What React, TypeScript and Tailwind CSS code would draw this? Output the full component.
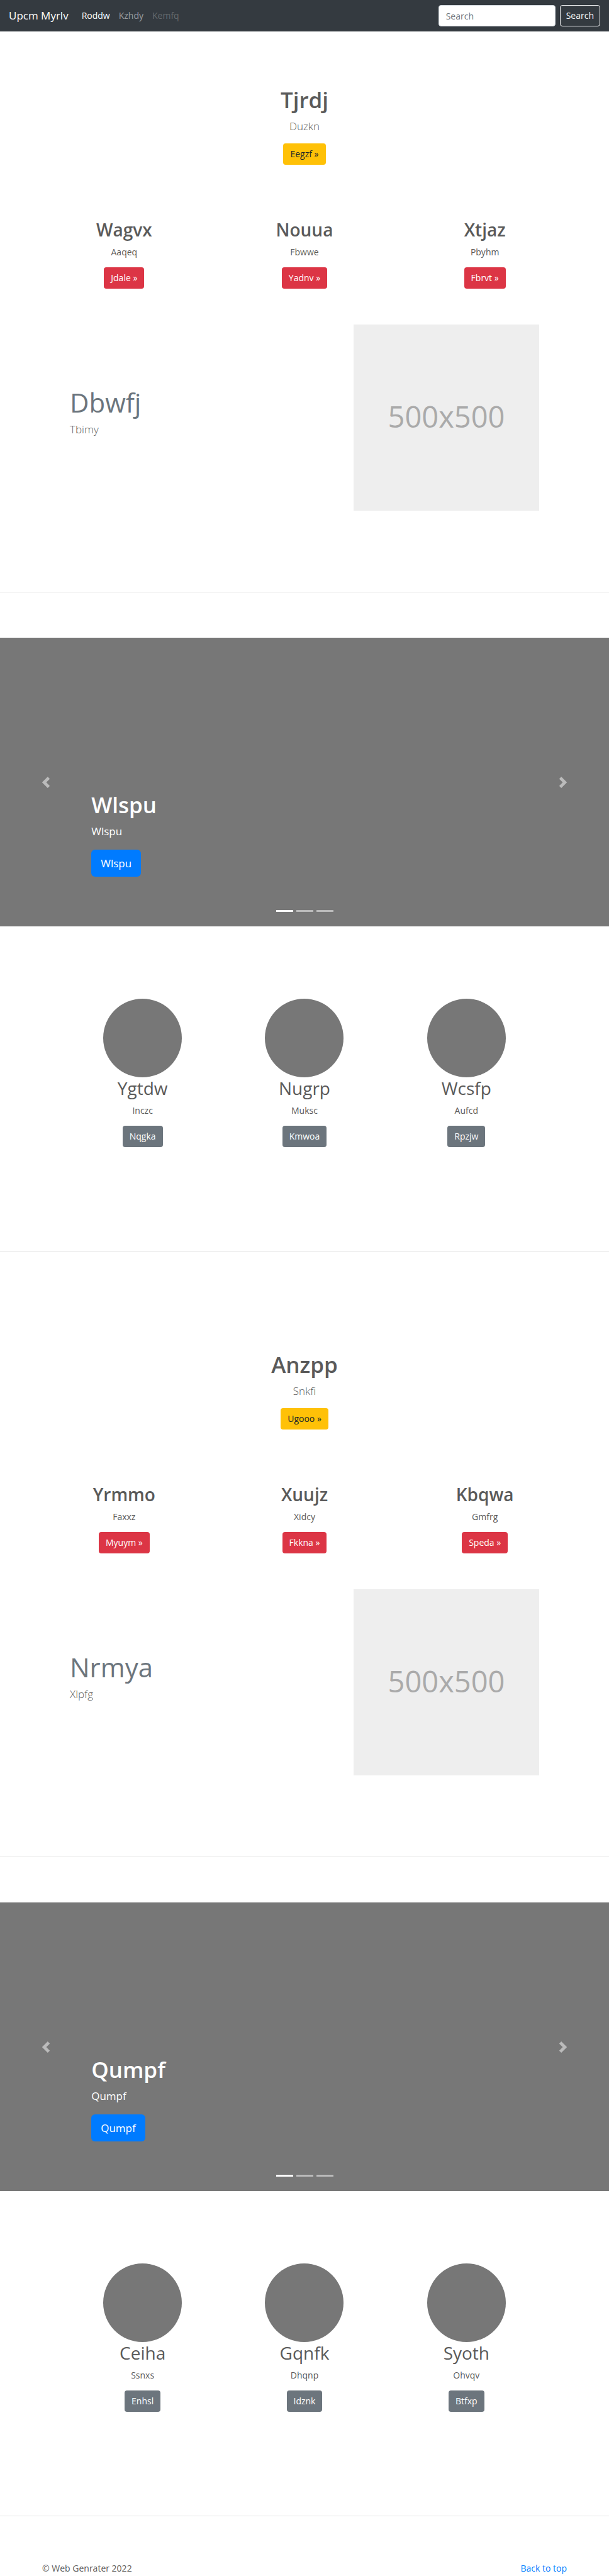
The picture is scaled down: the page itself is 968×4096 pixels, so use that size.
import React from "react";

type Item = { title: string; text: string; action: string };

type BlockData = {
  hero: Item;
  features: Item[];
  featurette: { title: string; text: string };
  slide: string;
  people: Item[];
};

const blocks: BlockData[] = [
  {
    hero: { title: "Tjrdj", text: "Duzkn", action: "Eegzf »" },
    features: [
      { title: "Wagvx", text: "Aaqeq", action: "Jdale »" },
      { title: "Nouua", text: "Fbwwe", action: "Yadnv »" },
      { title: "Xtjaz", text: "Pbyhm", action: "Fbrvt »" },
    ],
    featurette: { title: "Dbwfj", text: "Tbimy" },
    slide: "Wlspu",
    people: [
      { title: "Ygtdw", text: "Inczc", action: "Nqgka" },
      { title: "Nugrp", text: "Muksc", action: "Kmwoa" },
      { title: "Wcsfp", text: "Aufcd", action: "Rpzjw" },
    ],
  },
  {
    hero: { title: "Anzpp", text: "Snkfi", action: "Ugooo »" },
    features: [
      { title: "Yrmmo", text: "Faxxz", action: "Myuym »" },
      { title: "Xuujz", text: "Xidcy", action: "Fkkna »" },
      { title: "Kbqwa", text: "Gmfrg", action: "Speda »" },
    ],
    featurette: { title: "Nrmya", text: "Xlpfg" },
    slide: "Qumpf",
    people: [
      { title: "Ceiha", text: "Ssnxs", action: "Enhsl" },
      { title: "Gqnfk", text: "Dhqnp", action: "Idznk" },
      { title: "Syoth", text: "Ohvqv", action: "Btfxp" },
    ],
  },
];

const buttonTones = {
  warning: "bg-[#ffc107] text-[#212529]",
  danger: "bg-[#dc3545] text-white",
  secondary: "bg-[#6c757d] text-white",
};

function ActionLink({ tone, children }: { tone: keyof typeof buttonTones; children: React.ReactNode }) {
  return (
    <a href="#" className={`inline-flex h-[34px] items-center rounded px-[11px] text-sm ${buttonTones[tone]}`}>
      {children}
    </a>
  );
}

function Navbar() {
  return (
    <nav className="flex h-[50px] items-center justify-between bg-[#343a40] px-[14px]">
      <div className="flex items-center">
        <a href="#" className="mr-[21px] text-[17px] text-white">Upcm Myrlv</a>
        <div className="flex items-center gap-[14px] text-sm">
          <a href="#" className="text-white">Roddw</a>
          <a href="#" className="text-white/50">Kzhdy</a>
          <a href="#" className="text-white/25">Kemfq</a>
        </div>
      </div>
      <form className="flex gap-[7px]" onSubmit={(e) => e.preventDefault()}>
        <input
          type="text"
          aria-label="Search"
          placeholder="Search"
          className="h-[34px] w-[186px] rounded border border-[#ced4da] bg-white px-[11px] text-sm text-[#495057] placeholder:text-[#6c757d] placeholder:opacity-100"
        />
        <button type="submit" className="h-[34px] rounded border border-[#f8f9fa] px-[9px] text-sm text-[#f8f9fa]">
          Search
        </button>
      </form>
    </nav>
  );
}

function Arrow({ direction }: { direction: "prev" | "next" }) {
  return (
    <button
      type="button"
      aria-label={direction === "prev" ? "Previous" : "Next"}
      className="flex items-center justify-center opacity-50"
    >
      <svg viewBox="0 0 8 8" className="h-[18px] w-[18px] fill-white" aria-hidden="true">
        {direction === "prev" ? (
          <path d="M5.25 0l-4 4 4 4 1.5-1.5L4.25 4l2.5-2.5L5.25 0z" />
        ) : (
          <path d="M2.75 0l-1.5 1.5L3.75 4l-2.5 2.5L2.75 8l4-4-4-4z" />
        )}
      </svg>
    </button>
  );
}

function Carousel({ label }: { label: string }) {
  return (
    <section className="relative grid h-[459px] grid-cols-[15%_1fr_15%] bg-[#777]">
      <Arrow direction="prev" />
      <div className="flex flex-col items-start justify-end pb-[79px] text-white">
        <h1 className="text-[35px] leading-[43px] font-semibold">{label}</h1>
        <p className="mt-[7px] text-[17px] leading-[27px] font-medium">{label}</p>
        <a href="#" className="mt-4 inline-flex h-[43px] items-center rounded-md bg-[#007bff] px-[15px] text-[17px] font-medium">
          {label}
        </a>
      </div>
      <Arrow direction="next" />
      <div className="absolute inset-x-0 bottom-[23px] flex justify-center gap-[5px]">
        <span className="h-[3px] w-[27px] bg-white" />
        <span className="h-[3px] w-[27px] bg-white/50" />
        <span className="h-[3px] w-[27px] bg-white/50" />
      </div>
    </section>
  );
}

function Block({ data }: { data: BlockData }) {
  return (
    <>
      <section className="flex flex-col items-center">
        <h1 className="text-[35px] leading-[43px] font-semibold">{data.hero.title}</h1>
        <p className="mt-[7px] mb-[14px] text-[17px] leading-[27px] font-light">{data.hero.text}</p>
        <ActionLink tone="warning">{data.hero.action}</ActionLink>
      </section>

      <section className="mx-auto mt-[86px] grid max-w-[860px] grid-cols-3">
        {data.features.map((item) => (
          <div key={item.title} className="flex flex-col items-center">
            <h2 className="text-[28px] leading-[34px] font-semibold">{item.title}</h2>
            <p className="mt-[8px] mb-[14px] text-sm leading-[21px]">{item.text}</p>
            <ActionLink tone="danger">{item.action}</ActionLink>
          </div>
        ))}
      </section>

      <section className="mx-auto mt-[57px] flex max-w-[746px] items-start justify-between">
        <div className="pt-[101px]">
          <h2 className="text-[42px] leading-[45px] text-[#6c757d]">{data.featurette.title}</h2>
          <p className="mt-[7px] text-[17px] leading-[27px] font-light">{data.featurette.text}</p>
        </div>
        <div className="flex h-[296px] w-[295px] items-center justify-center bg-[#eee] pb-[3px] text-[47px] text-[#aaa]">
          500x500
        </div>
      </section>

      <hr className="mt-[129px] mb-[72px] border-[#e5e5e5]" />

      <Carousel label={data.slide} />

      <section className="mx-auto mt-[115px] grid max-w-[772px] grid-cols-3">
        {data.people.map((item) => (
          <div key={item.title} className="flex flex-col items-center">
            <div className="size-[125px] rounded-full bg-[#777]" />
            <h2 className="text-[28px] leading-[34px]">{item.title}</h2>
            <p className="mt-[8px] mb-[14px] text-sm leading-[21px]">{item.text}</p>
            <ActionLink tone="secondary">{item.action}</ActionLink>
          </div>
        ))}
      </section>

      <hr className="mt-[165px] border-[#e5e5e5]" />
    </>
  );
}

export default function App() {
  return (
    <div className="bg-white font-['Open_Sans','Noto_Sans',sans-serif] text-[#5a5a5a]">
      <Navbar />
      <main className="flex flex-col gap-[158px] pt-[87px]">
        {blocks.map((block) => (
          <div key={block.slide}>
            <Block data={block} />
          </div>
        ))}
      </main>
      <footer className="mt-[72px] flex justify-between px-[67px] pb-[2px] text-sm leading-[21px]">
        <p>© Web Genrater 2022</p>
        <a href="#" className="text-[#007bff]">Back to top</a>
      </footer>
    </div>
  );
}
